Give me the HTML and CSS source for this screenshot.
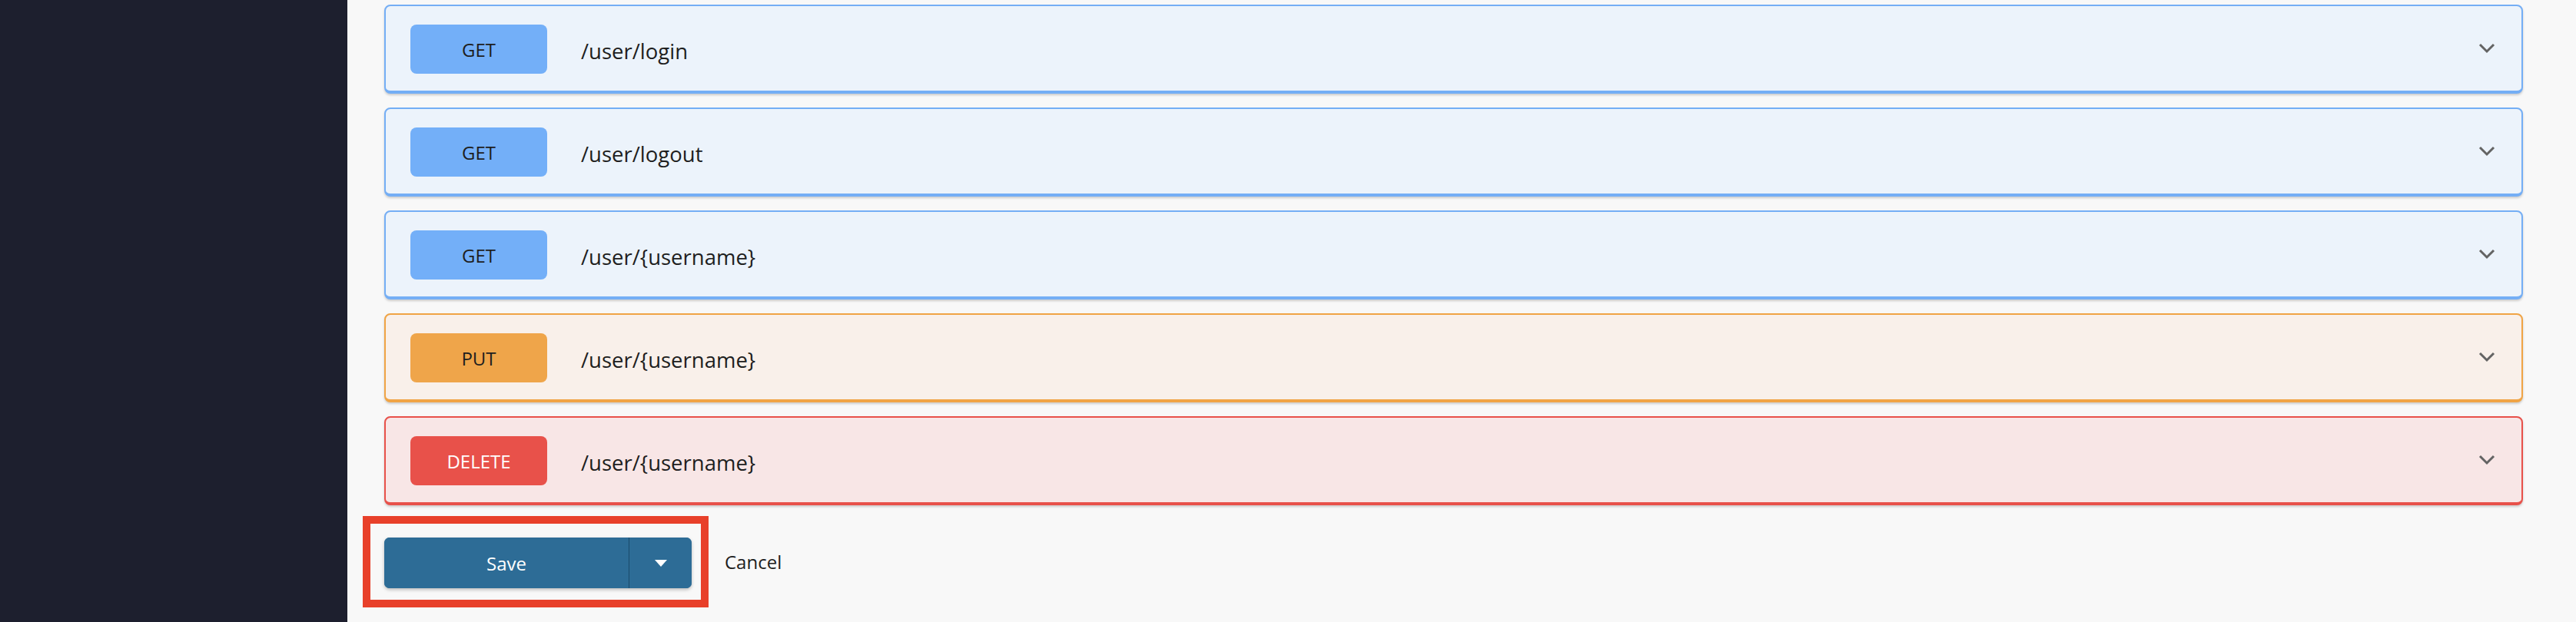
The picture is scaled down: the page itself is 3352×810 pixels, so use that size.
FILE: index.html
```html
<!DOCTYPE html>
<html>
<head>
<meta charset="utf-8">
<link rel="stylesheet" href="styles.css">
</head>
<body>
<div class="app">
  <aside class="sidebar"></aside>
  <main class="main">
    <div class="ops">
      <div class="op op-get">
        <span class="badge">GET</span>
        <span class="path">/user/login</span>
        <svg class="chev" width="22" height="14" viewBox="0 0 22 14"><path d="M2 2 L11 11 L20 2" fill="none" stroke="#636363" stroke-width="3"/></svg>
      </div>
      <div class="op op-get">
        <span class="badge">GET</span>
        <span class="path">/user/logout</span>
        <svg class="chev" width="22" height="14" viewBox="0 0 22 14"><path d="M2 2 L11 11 L20 2" fill="none" stroke="#636363" stroke-width="3"/></svg>
      </div>
      <div class="op op-get">
        <span class="badge">GET</span>
        <span class="path">/user/{username}</span>
        <svg class="chev" width="22" height="14" viewBox="0 0 22 14"><path d="M2 2 L11 11 L20 2" fill="none" stroke="#636363" stroke-width="3"/></svg>
      </div>
      <div class="op op-put">
        <span class="badge">PUT</span>
        <span class="path">/user/{username}</span>
        <svg class="chev" width="22" height="14" viewBox="0 0 22 14"><path d="M2 2 L11 11 L20 2" fill="none" stroke="#636363" stroke-width="3"/></svg>
      </div>
      <div class="op op-delete">
        <span class="badge">DELETE</span>
        <span class="path">/user/{username}</span>
        <svg class="chev" width="22" height="14" viewBox="0 0 22 14"><path d="M2 2 L11 11 L20 2" fill="none" stroke="#636363" stroke-width="3"/></svg>
      </div>
    </div>
    <div class="footer">
      <div class="highlight">
        <div class="split-btn">
          <button class="save">Save</button>
          <button class="drop"><svg width="16" height="9" viewBox="0 0 16 9"><path d="M0 0 L16 0 L8 9 Z" fill="#fff"/></svg></button>
        </div>
      </div>
      <span class="cancel">Cancel</span>
    </div>
  </main>
</div>
</body>
</html>
```

FILE: styles.css
```css
* { box-sizing: border-box; }
html, body { margin: 0; padding: 0; }
body {
  width: 3352px;
  height: 810px;
  overflow: hidden;
  background: #f8f8f8;
  font-family: "Open Sans", "Noto Sans", sans-serif;
  color: #1e1e1e;
}
.app { display: flex; height: 810px; }
.sidebar { width: 452px; flex: none; background: #1d1f2e; }
.main {
  flex: 1;
  background: #f8f8f8;
  padding: 6px 69px 0 48px;
}
.ops { display: flex; flex-direction: column; gap: 18px; }
.op {
  height: 116px;
  display: flex;
  align-items: center;
  border: 2px solid;
  border-bottom-width: 4px;
  border-radius: 8px;
  padding: 0 34px 0 32px;
  box-shadow: 0 2px 3px rgba(0,0,0,0.18);
}
.op-get { background: #ecf3fb; border-color: #74aef5; }
.op-put { background: #f9f0ea; border-color: #f0a445; }
.op-delete { background: #f8e6e6; border-color: #e8514a; }
.badge {
  width: 178px;
  height: 64px;
  border-radius: 8px;
  display: flex;
  align-items: center;
  justify-content: center;
  font-size: 24px;
  color: #1e1e1e;
  margin-top: 2px;
}
.op-get .badge { background: #73aff8; }
.op-put .badge { background: #efa54a; }
.op-delete .badge { background: #e8514a; color: #fff; }
.path {
  margin-left: 44px;
  font-size: 27.5px;
  flex: 1;
  margin-top: 6px;
}
.chev { flex: none; }
.footer {
  display: flex;
  align-items: center;
  margin-top: 14px;
}
.highlight {
  margin-left: -28px;
  border: 10px solid #e8402a;
  padding: 18px 12px 15px 18px;
}
.split-btn {
  display: flex;
  height: 66px;
  width: 400px;
  border-radius: 7px;
  overflow: hidden;
  background: #2d6c96;
  box-shadow: 0 2px 4px rgba(0,0,0,0.25);
}
.split-btn button {
  border: 0;
  background: #2d6c96;
  color: #fff;
  font-family: "Open Sans", "Noto Sans", sans-serif;
  font-size: 24px;
  padding: 0;
  display: flex;
  align-items: center;
  justify-content: center;
}
.save { width: 319px; border-right: 1px solid #1a4a6a !important; }
.drop { flex: 1; }
.cancel {
  margin-left: 21px;
  font-size: 24px;
  color: #1e1e1e;
}
```
